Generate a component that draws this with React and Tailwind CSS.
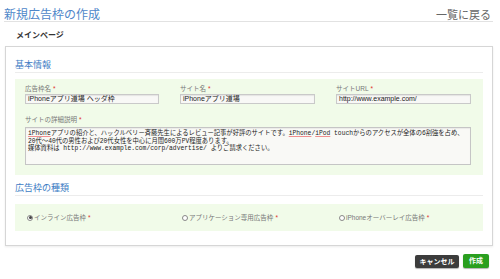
import React from "react";

const sans = { fontFamily: '"Liberation Sans", "Noto Sans CJK JP", sans-serif' };
const mono = { fontFamily: '"Liberation Mono", "Noto Sans CJK JP", monospace' };

function Req() {
  return <span className="text-[#e0302a] ml-[2px]">*</span>;
}

function Field({ label, value }) {
  return (
    <div className="flex flex-col">
      <div className="text-[6.5px] leading-[8px] text-[#777]">
        {label}
        <Req />
      </div>
      <div className="mt-[1px] h-[10px] border border-[#c9c9c9] bg-[#f8f8f6] px-[2px] text-[7px] leading-[8px] text-[#222] shadow-[inset_0_1px_1px_rgba(0,0,0,0.08)]">
        {value}
      </div>
    </div>
  );
}

function Radio({ label, checked }) {
  return (
    <div className="flex items-center text-[6.5px] leading-[8px] text-[#777]">
      <span className="w-[6px] h-[6px] rounded-full border border-[#888] bg-white flex items-center justify-center mr-[1px]">
        {checked && <span className="w-[3px] h-[3px] rounded-full bg-[#444]" />}
      </span>
      {label}
      <Req />
    </div>
  );
}

function Sp({ children }) {
  return <span className="underline decoration-[#f09090] decoration-[1px] underline-offset-[1px]">{children}</span>;
}

export default function App() {
  return (
    <div className="w-[500px] h-[279px] bg-white overflow-hidden" style={sans}>
      <div className="ml-[4px] mr-[7px] h-[22px] pt-[8px] border-b border-[#e2e2e2] flex justify-between items-start">
        <div className="text-[12px] leading-[14px] text-[#4f87c9]">新規広告枠の作成</div>
        <div className="text-[11px] leading-[14px] text-[#666] mr-[2px]">一覧に戻る</div>
      </div>
      <div className="ml-[16px] mt-[9px] text-[8px] leading-[10px] font-bold text-[#333]">メインページ</div>
      <div className="ml-[5px] mr-[7px] mt-[5px] h-[200px] border border-[#d6d6d6] shadow-[0_1px_2px_rgba(0,0,0,0.08)] px-[9px] pt-[13px]">
        <div className="text-[9px] leading-[11px] pb-[1px] border-b border-[#ececec] text-[#3d7cc4]">基本情報</div>
        <div className="mt-[6px] h-[96px] bg-[#f1fbe9] pl-[10px] pr-[12px] pt-[6px]">
          <div className="grid grid-cols-[134px_135px_135px] gap-x-[21px]">
            <Field label="広告枠名" value="iPhoneアプリ道場 ヘッダ枠" />
            <Field label="サイト名" value="iPhoneアプリ道場" />
            <Field label="サイトURL" value="http://www.example.com/" />
          </div>
          <div className="mt-[12px] text-[6.5px] leading-[8px] text-[#777]">
            サイトの詳細説明
            <Req />
          </div>
          <div
            className="mt-[3px] w-[446px] h-[38px] border border-[#c5c5c5] bg-[#f9f9f6] px-[2px] pt-[2px] text-[6.3px] leading-[7.5px] text-[#222] whitespace-nowrap shadow-[inset_0_1px_1px_rgba(0,0,0,0.06)]"
            style={mono}
          >
            <div>
              <Sp>iPhone</Sp>アプリの紹介と、ハックルベリー斉藤先生によるレビュー記事が好評のサイトです。<Sp>iPhone</Sp>/<Sp>iPod</Sp> touchからのアクセスが全体の6割強を占め、
            </div>
            <div>20代〜40代の男性および20代女性を中心に月間600万PV程度あります。</div>
            <div>媒体資料は http://www.example.com/corp/advertise/ よりご請求ください。</div>
          </div>
        </div>
        <div className="mt-[8px] text-[9px] leading-[11px] pb-[1px] border-b border-[#ececec] text-[#3d7cc4]">広告枠の種類</div>
        <div className="mt-[8px] h-[27px] bg-[#f1fbe9] pl-[12px] flex items-center">
          <div className="w-[155px]">
            <Radio label="インライン広告枠" checked />
          </div>
          <div className="w-[157px]">
            <Radio label="アプリケーション専用広告枠" />
          </div>
          <div>
            <Radio label="iPhoneオーバーレイ広告枠" />
          </div>
        </div>
      </div>
      <div className="mt-[8px] mr-[11px] flex justify-end items-center gap-[4px]">
        <div className="w-[44px] h-[13px] rounded-[2px] bg-[#3c3c3c] text-white text-[7px] font-bold leading-[13px] text-center shadow-[0_1px_1px_rgba(0,0,0,0.3)]">
          キャンセル
        </div>
        <div className="w-[26px] h-[14px] rounded-[2px] bg-[#2a9f1f] text-white text-[7px] font-bold leading-[14px] text-center shadow-[0_1px_1px_rgba(0,0,0,0.3)]">
          作成
        </div>
      </div>
    </div>
  );
}
